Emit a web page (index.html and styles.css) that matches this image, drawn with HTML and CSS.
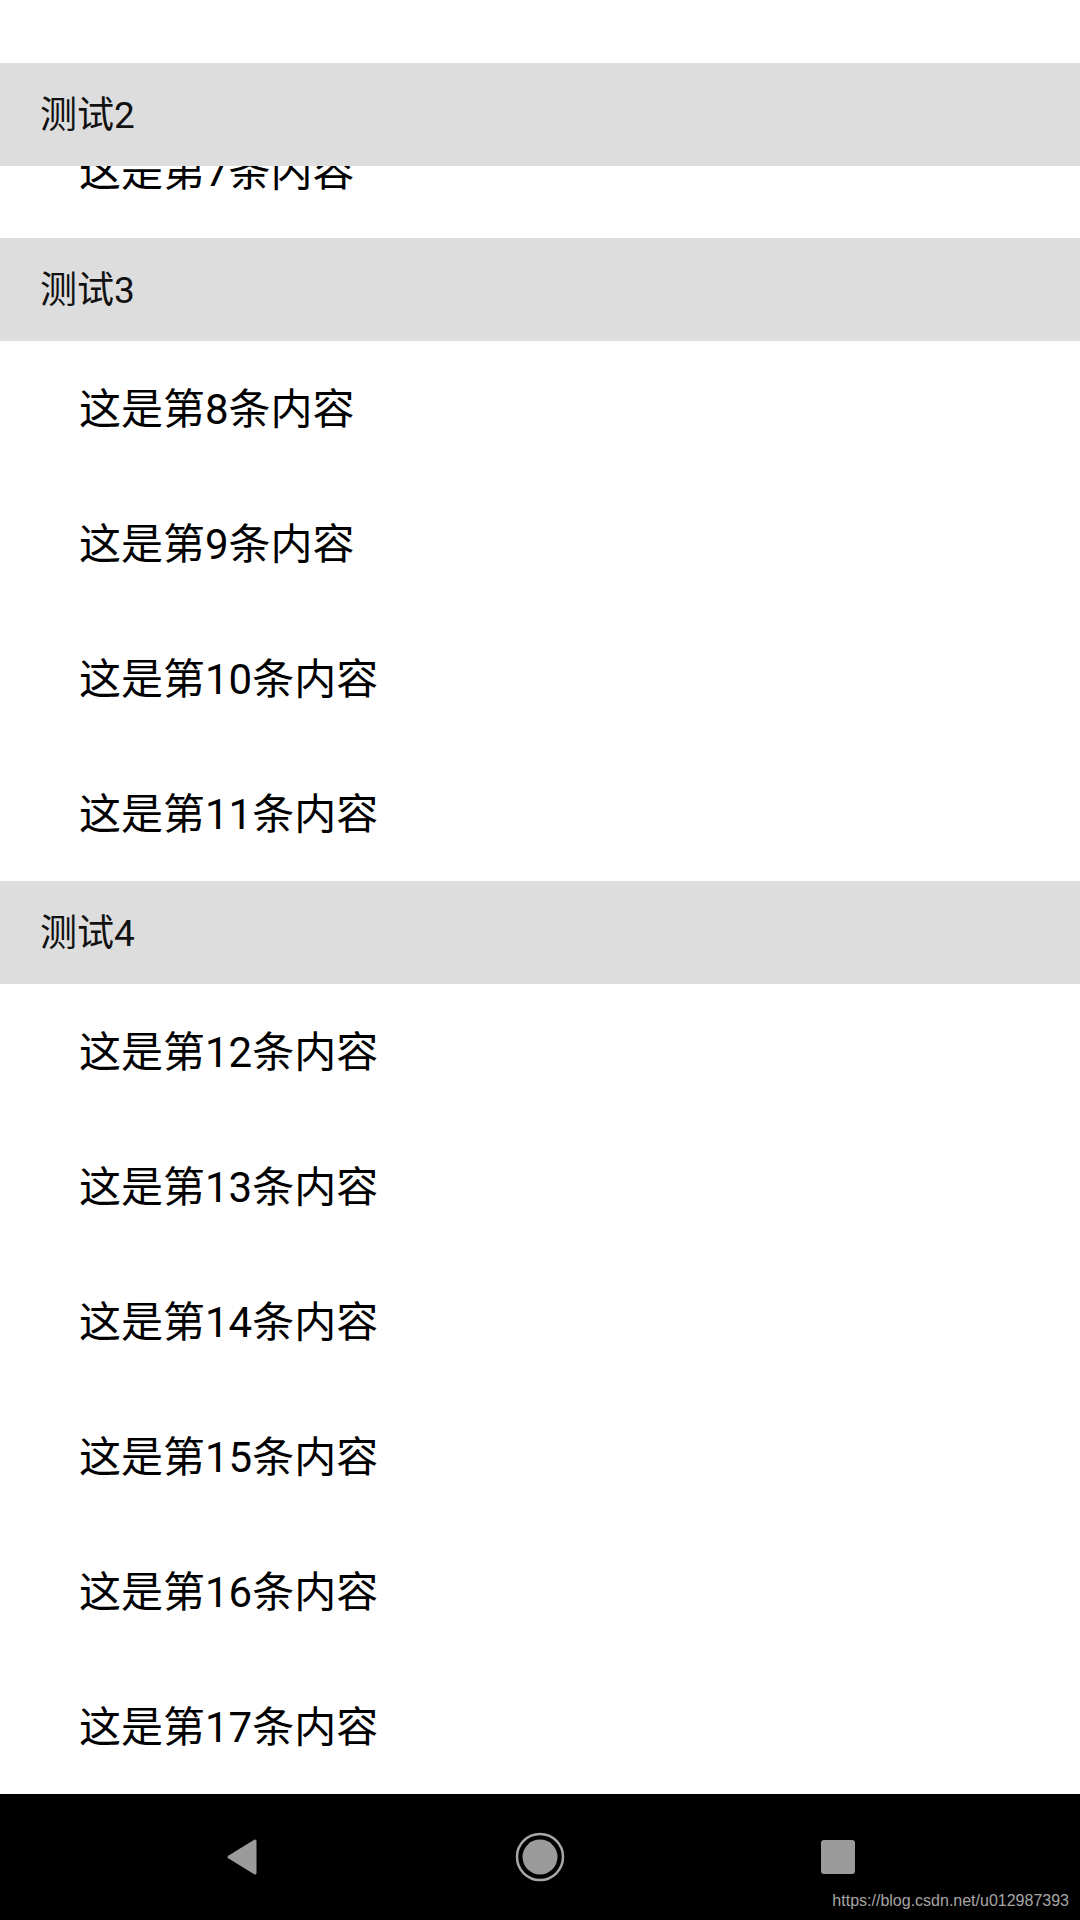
FILE: index.html
```html
<!DOCTYPE html>
<html lang="zh-CN">
<head>
<meta charset="UTF-8">
<title>分组列表</title>
<link rel="stylesheet" href="styles.css">
</head>
<body>
<div class="screen">
    <div class="status"></div>
    <div class="list">
        <div class="header pinned">测试2</div>
        <div class="rows">
            <div class="item">这是第7条内容</div>
            <div class="header">测试3</div>
            <div class="item">这是第8条内容</div>
            <div class="item">这是第9条内容</div>
            <div class="item">这是第10条内容</div>
            <div class="item">这是第11条内容</div>
            <div class="header">测试4</div>
            <div class="item">这是第12条内容</div>
            <div class="item">这是第13条内容</div>
            <div class="item">这是第14条内容</div>
            <div class="item">这是第15条内容</div>
            <div class="item">这是第16条内容</div>
            <div class="item">这是第17条内容</div>
        </div>
    </div>
    <div class="navbar">
        <div class="nav-btn">
            <svg width="48" height="48" viewBox="0 0 48 48">
                <path d="M11 24 L37 8 L37 40 Z" fill="#9b9b9b" stroke="#9b9b9b" stroke-width="3" stroke-linejoin="round"/>
            </svg>
        </div>
        <div class="nav-btn">
            <svg width="52" height="52" viewBox="0 0 52 52">
                <circle cx="26" cy="26" r="23" fill="none" stroke="#a8a8a8" stroke-width="2.5"/>
                <circle cx="26" cy="26" r="17.5" fill="#9b9b9b"/>
            </svg>
        </div>
        <div class="nav-btn">
            <svg width="48" height="48" viewBox="0 0 48 48">
                <rect x="7" y="7" width="34" height="34" rx="3" fill="#9b9b9b"/>
            </svg>
        </div>
        <div class="watermark">https://blog.csdn.net/u012987393</div>
    </div>
</div>
</body>
</html>
```

FILE: styles.css
```css
body { margin: 0; background: #fff; font-family: Roboto, "Noto Sans CJK SC", sans-serif; }
.screen { width: 1080px; height: 1920px; display: flex; flex-direction: column; overflow: hidden; }
.status { height: 63px; background: #fff; flex-shrink: 0; }
.list { flex: 1; position: relative; overflow: hidden; }
.rows { padding-top: 40px; }
.header { height: 103px; box-sizing: border-box; padding: 0 0 5px 40px; background: #dddddd; color: #111; font-size: 37px; display: flex; align-items: center; }
.pinned { position: absolute; top: 0; left: 0; right: 0; z-index: 2; }
.item { height: 135px; box-sizing: border-box; padding: 0 0 6px 79px; color: #000; font-size: 42px; display: flex; align-items: center; }
.navbar { height: 126px; flex-shrink: 0; background: #000; position: relative; display: flex; justify-content: center; align-items: center; gap: 198px; }
.nav-btn { width: 100px; display: flex; justify-content: center; align-items: center; }
.nav-btn svg { display: block; }
.watermark { position: absolute; right: 11px; bottom: 10px; font-family: "Liberation Sans", Arial, sans-serif; font-size: 16px; color: #a6a6a6; }
```
